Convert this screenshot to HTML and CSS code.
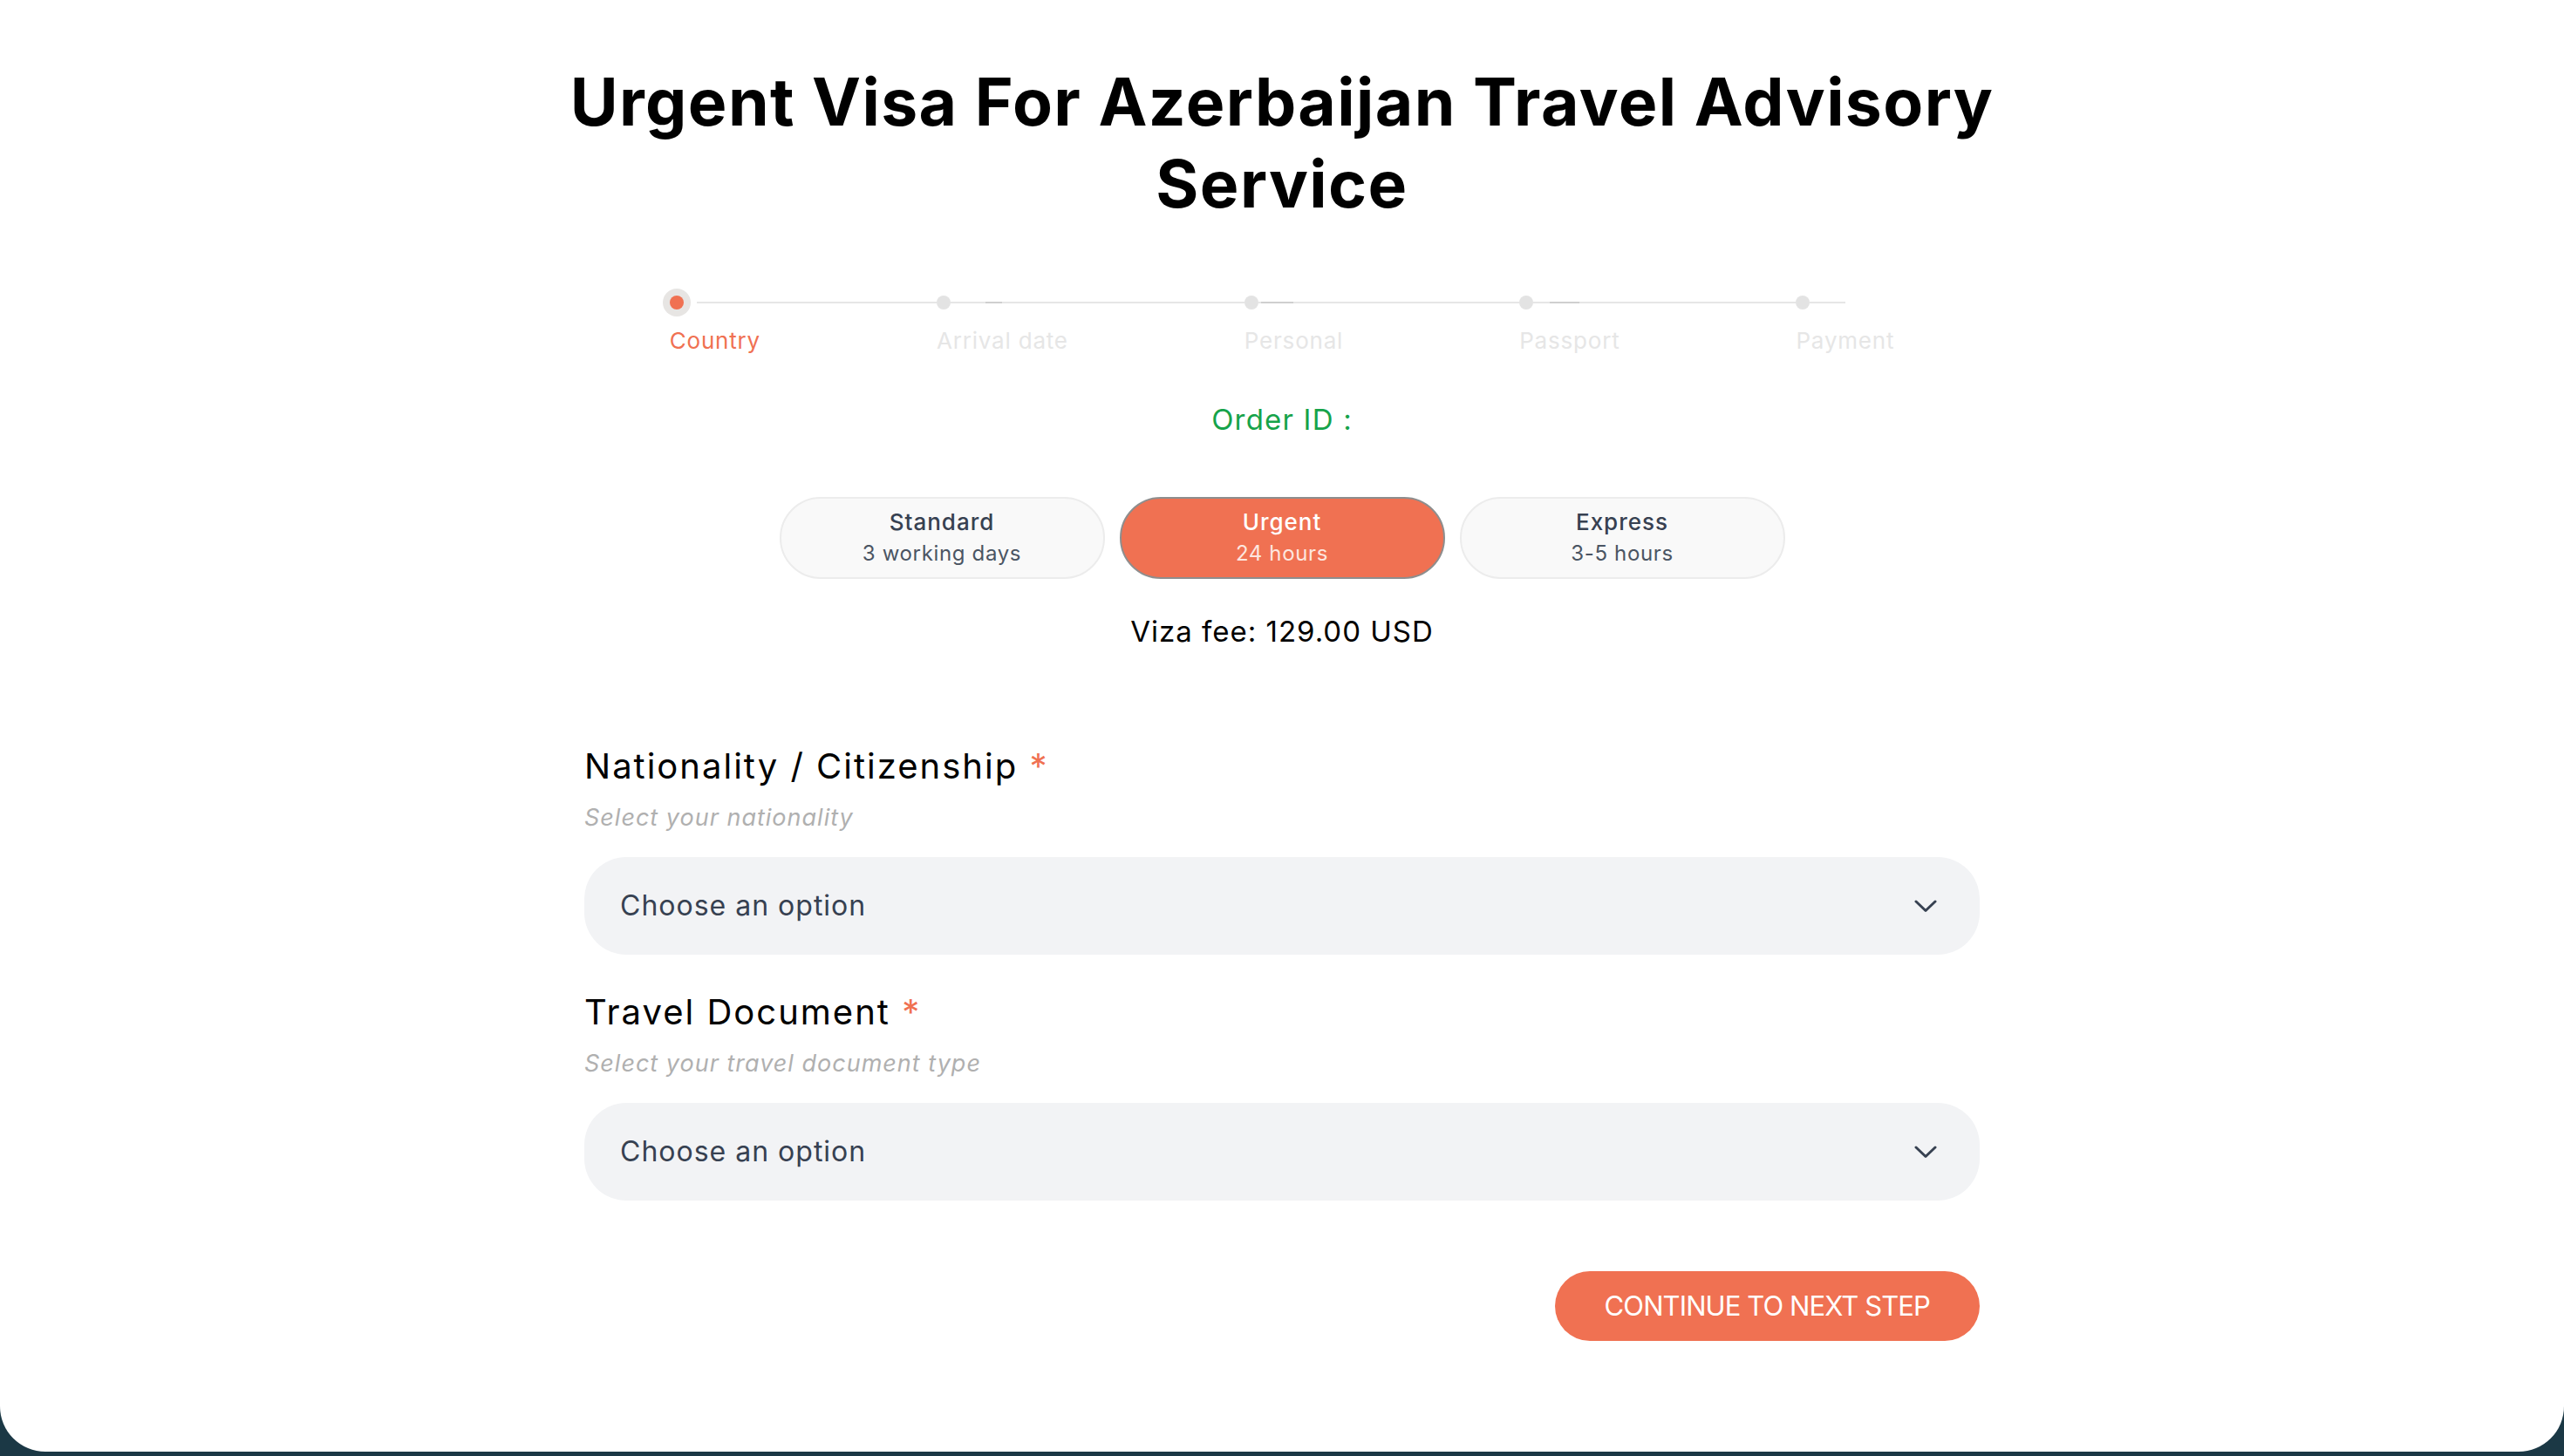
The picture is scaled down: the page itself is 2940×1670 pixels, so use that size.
FILE: index.html
```html
<!DOCTYPE html>
<html lang="en">
<head>
<meta charset="utf-8">
<title>Urgent Visa For Azerbaijan Travel Advisory Service</title>
<link rel="stylesheet" href="styles.css">
</head>
<body>
<div class="page">
  <main class="wrap">
    <h1 class="title">Urgent Visa For Azerbaijan Travel Advisory<br>Service</h1>

    <ol class="stepper">
      <li class="step is-active">
        <div class="step-track"><span class="step-dot"></span><span class="step-line"></span></div>
        <span class="step-label">Country</span>
      </li>
      <li class="step">
        <div class="step-track"><span class="step-dot"></span><span class="step-line"><i class="seg seg-1"></i></span></div>
        <span class="step-label">Arrival date</span>
      </li>
      <li class="step">
        <div class="step-track"><span class="step-dot"></span><span class="step-line"><i class="seg seg-2"></i></span></div>
        <span class="step-label">Personal</span>
      </li>
      <li class="step">
        <div class="step-track"><span class="step-dot"></span><span class="step-line"><i class="seg seg-2 seg-3"></i></span></div>
        <span class="step-label">Passport</span>
      </li>
      <li class="step is-last">
        <div class="step-track"><span class="step-dot"></span><span class="step-line"></span></div>
        <span class="step-label">Payment</span>
      </li>
    </ol>

    <p class="order-id">Order ID :</p>

    <div class="plans">
      <button class="plan" type="button"><span class="plan-name">Standard</span><span class="plan-time">3 working days</span></button>
      <button class="plan is-selected" type="button"><span class="plan-name">Urgent</span><span class="plan-time">24 hours</span></button>
      <button class="plan" type="button"><span class="plan-name">Express</span><span class="plan-time">3-5 hours</span></button>
    </div>

    <p class="fee">Viza fee: 129.00 USD</p>

    <form class="form">
      <div class="field">
        <label class="field-label">Nationality / Citizenship <span class="req">*</span></label>
        <p class="field-help">Select your nationality</p>
        <div class="select">
          <span class="select-value">Choose an option</span>
          <svg class="chevron" width="26" height="15" viewBox="0 0 26 15" aria-hidden="true"><path d="M2 2 L13 12.5 L24 2" fill="none" stroke="#374151" stroke-width="3" stroke-linecap="round" stroke-linejoin="round"/></svg>
        </div>
      </div>
      <div class="field">
        <label class="field-label">Travel Document <span class="req">*</span></label>
        <p class="field-help">Select your travel document type</p>
        <div class="select">
          <span class="select-value">Choose an option</span>
          <svg class="chevron" width="26" height="15" viewBox="0 0 26 15" aria-hidden="true"><path d="M2 2 L13 12.5 L24 2" fill="none" stroke="#374151" stroke-width="3" stroke-linecap="round" stroke-linejoin="round"/></svg>
        </div>
      </div>
      <div class="actions">
        <button class="next-btn" type="button">CONTINUE TO NEXT STEP</button>
      </div>
    </form>
  </main>
</div>
</body>
</html>
```

FILE: styles.css
```css
* { box-sizing: border-box; }

html, body {
  margin: 0;
  padding: 0;
  background: #1b3845;
}

body {
  font-family: Inter, "Noto Sans", "Liberation Sans", sans-serif;
  color: #000;
}

.page {
  background: #fff;
  min-height: 1665px;
  border-radius: 0 0 52px 52px;
  overflow: hidden;
}

.wrap {
  width: 1600px;
  margin: 0 auto;
  padding-top: 70px;
  display: flex;
  flex-direction: column;
  align-items: center;
}

.title {
  margin: 0;
  font-size: 75px;
  line-height: 94px;
  font-weight: 700;
  text-align: center;
  white-space: nowrap;
  color: #000;
  letter-spacing: 1.4px;
}

/* stepper */
.stepper {
  list-style: none;
  margin: 81px 0 0;
  padding: 0;
  display: flex;
}

.step {
  display: flex;
  flex-direction: column;
  padding-right: 202px;
}

.step-track {
  display: flex;
  align-items: center;
  height: 16px;
  margin-right: -202px;
}

.step-dot {
  width: 16px;
  height: 16px;
  border-radius: 50%;
  background: #e3e3e3;
  flex: none;
}

.step-line {
  flex: 1;
  height: 2px;
  background: #e6e6e6;
  display: flex;
}

.seg {
  display: block;
  height: 2px;
  width: 19px;
  margin-left: 40px;
  background: #cfcfcf;
}

.seg-2 { margin-left: 3px; width: 37px; }
.seg-3 { margin-left: 19px; width: 34px; }

.is-active .step-dot {
  background: #f07152;
  box-shadow: 0 0 0 8px #e7e5e3;
}

.is-active .step-line { margin-left: 15px; }

.step.is-last { padding-right: 0; }
.step.is-last .step-track { margin-right: 56px; }

.step-label {
  margin-top: 19px;
  font-size: 26px;
  line-height: 34px;
  letter-spacing: 0.8px;
  color: #e6e6e6;
  white-space: nowrap;
}

.is-active .step-label { color: #f07152; }

.order-id {
  margin: 50px 0 0;
  font-size: 33px;
  line-height: 46px;
  letter-spacing: 1.2px;
  color: #16a34a;
}

/* plans */
.plans {
  margin-top: 66px;
  display: flex;
  gap: 17px;
}

.plan {
  width: 373px;
  height: 94px;
  border: 2px solid #ececec;
  border-radius: 47px;
  background: #f9f9f9;
  display: flex;
  flex-direction: column;
  align-items: center;
  justify-content: center;
  font-family: inherit;
  padding: 0;
  cursor: pointer;
}

.plan-name {
  font-size: 26px;
  line-height: 36px;
  font-weight: 500;
  letter-spacing: 1px;
  color: #374151;
}

.plan-time {
  font-size: 24px;
  line-height: 36px;
  font-weight: 400;
  letter-spacing: 0.65px;
  color: #4b5563;
}

.plan.is-selected {
  background: #f07152;
  border-color: #8e8e8e;
}

.plan.is-selected .plan-name { color: #fff; }
.plan.is-selected .plan-time { color: #fde6df; }

.fee {
  margin: 37px 0 0;
  font-size: 33px;
  line-height: 46px;
  letter-spacing: 1px;
  color: #000;
}

/* form */
.form {
  align-self: stretch;
  margin-top: 104px;
}

.field + .field { margin-top: 38px; }

.field-label {
  display: block;
  font-size: 40px;
  line-height: 56px;
  letter-spacing: 2px;
  color: #000;
}

.req {
  color: #f07152;
  margin-left: 0;
  letter-spacing: 0;
}

.field-help {
  margin: 12px 0 0;
  font-size: 27px;
  line-height: 38px;
  font-style: italic;
  letter-spacing: 1px;
  color: #b0b0b0;
}

.select {
  margin-top: 26px;
  height: 112px;
  border-radius: 48px;
  background: #f2f3f5;
  display: flex;
  align-items: center;
  justify-content: space-between;
  padding: 0 49px 0 41px;
}

.select-value {
  font-size: 32px;
  line-height: 40px;
  letter-spacing: 1px;
  color: #374151;
}

.chevron { display: block; flex: none; }

.actions {
  margin-top: 81px;
  display: flex;
  justify-content: flex-end;
}

.next-btn {
  height: 80px;
  padding: 0 57px;
  border: 0;
  border-radius: 40px;
  background: #f07152;
  color: #fff;
  font-family: inherit;
  font-size: 31px;
  line-height: 40px;
  letter-spacing: -0.9px;
  cursor: pointer;
}
```
